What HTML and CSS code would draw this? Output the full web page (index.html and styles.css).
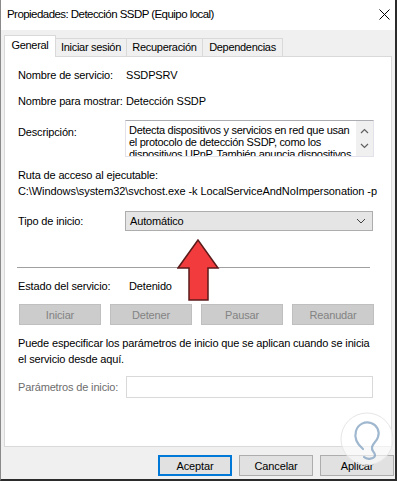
FILE: index.html
```html
<!DOCTYPE html>
<html lang="es">
<head>
<meta charset="utf-8">
<title>Propiedades: Detección SSDP (Equipo local)</title>
<link rel="stylesheet" href="styles.css">
</head>
<body>
<div class="window">
  <div class="titlebar">
    <span class="title">Propiedades: Detección SSDP (Equipo local)</span>
    <svg class="close" width="11" height="11" viewBox="0 0 11 11"><path d="M0.5 0.5 L10.5 10.5 M10.5 0.5 L0.5 10.5" stroke="#000" stroke-width="1" fill="none"/></svg>
  </div>
  <div class="tabs">
    <div class="tab active t1">General</div>
    <div class="tab t2">Iniciar sesión</div>
    <div class="tab t3">Recuperación</div>
    <div class="tab t4">Dependencias</div>
  </div>
  <div class="panel">
    <div class="row r1"><span class="label">Nombre de servicio:</span><span class="value">SSDPSRV</span></div>
    <div class="row r2"><span class="label">Nombre para mostrar:</span><span class="value">Detección SSDP</span></div>
    <div class="row desc">
      <span class="label desc-label">Descripción:</span>
      <div class="textbox">
        <div class="textlines">
          <span class="tl">Detecta dispositivos y servicios en red que usan</span>
          <span class="tl">el protocolo de detección SSDP, como los</span>
          <span class="tl">dispositivos UPnP. También anuncia dispositivos</span>
        </div>
        <div class="vscroll">
          <svg width="9" height="6" viewBox="0 0 9 6"><path d="M1 5 L4.5 1.5 L8 5" stroke="#606060" stroke-width="1.2" fill="none"/></svg>
          <svg width="9" height="6" viewBox="0 0 9 6"><path d="M1 1 L4.5 4.5 L8 1" stroke="#606060" stroke-width="1.2" fill="none"/></svg>
        </div>
      </div>
    </div>
    <div class="line ruta">Ruta de acceso al ejecutable:</div>
    <div class="line path">C:\Windows\system32\svchost.exe -k LocalServiceAndNoImpersonation -p</div>
    <div class="row tipo">
      <span class="label">Tipo de inicio:</span>
      <div class="select">
        <span>Automático</span>
        <svg width="10" height="6" viewBox="0 0 10 6"><path d="M1 1 L5 5 L9 1" stroke="#404040" stroke-width="1" fill="none"/></svg>
      </div>
    </div>
    <div class="separator"></div>
    <div class="row estado"><span class="label">Estado del servicio:</span><span class="value v2">Detenido</span></div>
    <div class="svc-buttons">
      <div class="dbtn">Iniciar</div>
      <div class="dbtn">Detener</div>
      <div class="dbtn">Pausar</div>
      <div class="dbtn">Reanudar</div>
    </div>
    <div class="para">Puede especificar los parámetros de inicio que se aplican cuando se inicia<br>el servicio desde aquí.</div>
    <div class="row params">
      <span class="label grey">Parámetros de inicio:</span>
      <div class="input"></div>
    </div>
  </div>
  <div class="footer">
    <div class="btn default">Aceptar</div>
    <div class="btn">Cancelar</div>
    <div class="btn">Aplicar</div>
  </div>

  <svg class="arrow" width="44" height="66" viewBox="0 0 44 66">
    <polygon points="21,2 1,30 12,30 12,62 31,62 31,30 41,30" fill="#f23b3d" stroke="#5c1a1a" stroke-width="1.5" stroke-linejoin="miter"/>
  </svg>

  <svg class="watermark" width="56" height="56" viewBox="0 0 56 56">
    <circle cx="28" cy="28" r="26" fill="#ffffff" fill-opacity="0.6" stroke="#e6e6e6" stroke-width="1"/>
    <path d="M24 38 C18 33 15 27 17 20 C19 13 26 10 32 12 C38 14 41 20 39 26 C38 30 34 32 33 36 C32 40 36 41 36 44 C36 48 28 49 25 46" stroke="#7f9fbf" stroke-width="2.2" fill="none" stroke-linecap="round" opacity="0.75"/>
  </svg>
</div>
</body>
</html>
```

FILE: styles.css
```css
* { box-sizing: border-box; }
html, body { margin: 0; padding: 0; }
body {
  font-family: "Liberation Sans", Arial, sans-serif;
  font-size: 11px;
  letter-spacing: -0.15px;
  color: #000;
  background: #fff;
}
.window {
  position: relative;
  width: 397px;
  height: 481px;
  border-left: 1px solid #8a8a8a;
  border-right: 2px solid #2b2b2b;
  border-bottom: 2px solid #2b2b2b;
  background: #f0f0f0;
  display: flex;
  flex-direction: column;
  overflow: hidden;
}
.titlebar {
  height: 30px;
  flex: none;
  background: #fff;
  display: flex;
  align-items: center;
  justify-content: space-between;
  padding: 0 5px 2px 6px;
  font-size: 11.5px;
}
.title { letter-spacing: -0.55px; }
.close { display: block; }

.tabs {
  height: 26px;
  flex: none;
  display: flex;
  align-items: flex-end;
  padding-left: 3px;
}
.tab {
  height: 18px;
  border: 1px solid #d9d9d9;
  border-bottom: none;
  background: #f0f0f0;
  display: flex;
  align-items: center;
  justify-content: center;
  margin-left: -1px;
  padding-bottom: 1px;
  letter-spacing: -0.3px;
}
.tab.active {
  height: 22px;
  background: #fff;
  margin-bottom: -1px;
  margin-left: 0;
  position: relative;
  z-index: 1;
  padding-bottom: 3px;
}
.t1 { width: 52px; }
.t2 { width: 72px; }
.t3 { width: 77px; }
.t4 { width: 81px; }

.panel {
  flex: none;
  margin-left: 3px;
  width: 388px;
  height: 391px;
  border: 1px solid #d9d9d9;
  background: #fff;
  padding: 10px 0 0 13px;
  display: flex;
  flex-direction: column;
}
.row { display: flex; line-height: 16px; }
.label { width: 108px; flex: none; white-space: nowrap; }
.value { white-space: nowrap; }
.v2 { padding-left: 3px; }
.grey { color: #6d6d6d; }
.r1 { margin-top: 0; }
.r2 { margin-top: 10px; }
.desc { margin-top: 11px; height: 37px; }
.desc-label { padding-top: 4px; }
.textbox {
  width: 249px;
  height: 37px;
  margin-left: -1px;
  border: 1px solid #e2e3ea;
  border-top-color: #abadb3;
  display: flex;
  overflow: hidden;
}
.textlines {
  flex: 1;
  padding: 3px 0 0 3px;
  line-height: 12px;
  overflow: hidden;
  letter-spacing: -0.3px;
}
.tl { display: block; white-space: nowrap; }
.vscroll {
  width: 17px;
  flex: none;
  background: #f0f0f0;
  display: flex;
  flex-direction: column;
  align-items: center;
  justify-content: space-between;
  padding: 7px 0 7px;
}
.vscroll svg { display: block; }
.line { line-height: 16px; white-space: nowrap; }
.ruta { margin-top: 10px; }
.path { letter-spacing: -0.08px; }
.tipo { margin-top: 12px; height: 20px; align-items: center; }
.select {
  width: 248px;
  height: 20px;
  margin-left: -1px;
  background: #e5e5e5;
  border: 1px solid #adadad;
  display: flex;
  align-items: center;
  justify-content: space-between;
  padding: 0 6px 0 4px;
}
.select svg { display: block; }
.separator {
  margin-top: 36px;
  margin-left: -1px;
  width: 353px;
  height: 1px;
  background: #a0a0a0;
  flex: none;
}
.estado { margin-top: 10px; }
.svc-buttons {
  margin-top: 10px;
  display: flex;
  gap: 9px;
  margin-left: 1px;
}
.dbtn {
  width: 82px;
  height: 21px;
  background: #cccccc;
  border: 1px solid #bfbfbf;
  color: #838383;
  display: flex;
  align-items: center;
  justify-content: center;
}
.para { margin-top: 10px; line-height: 16px; white-space: nowrap; }
.params { margin-top: 9px; height: 22px; align-items: center; }
.input {
  width: 247px;
  height: 22px;
  border: 1px solid #d9d9d9;
  background: #fff;
}

.footer {
  flex: none;
  display: flex;
  justify-content: flex-end;
  gap: 7px;
  padding-top: 8px;
  padding-right: 1px;
}
.btn {
  width: 74px;
  height: 21px;
  background: #e1e1e1;
  border: 1px solid #adadad;
  display: flex;
  align-items: center;
  justify-content: center;
}
.btn.default {
  border: 2px solid #0078d7;
}

.arrow {
  position: absolute;
  left: 176px;
  top: 238px;
  display: block;
}
.watermark {
  position: absolute;
  left: 338px;
  top: 411px;
  display: block;
}
```
